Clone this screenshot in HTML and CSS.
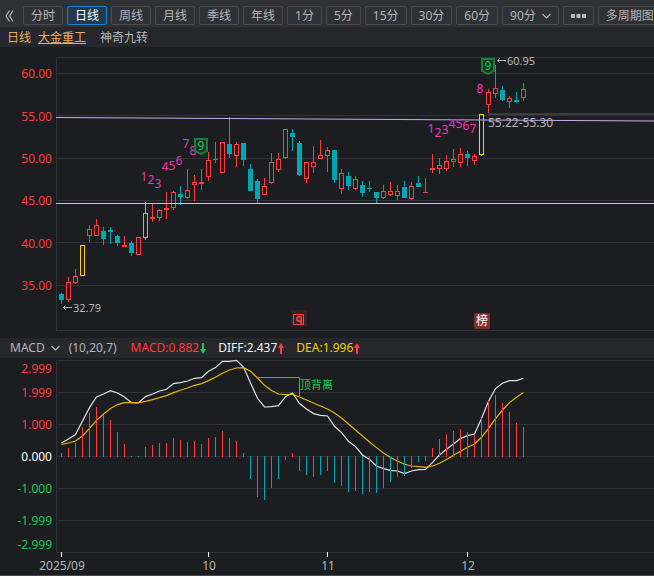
FILE: index.html
```html
<!DOCTYPE html>
<html lang="zh-Hans">
<head>
  <meta charset="UTF-8">
  <title>大金重工 日线</title>
  <link rel="stylesheet" href="styles.css">
</head>
<body>
  <nav class="toolbar">
    <button class="back" aria-label="收起">
      <svg width="9" height="12" viewBox="0 0 9 12"><path d="M4.5 0.5 L1 6 L4.5 11.5 M8 0.5 L4.5 6 L8 11.5"/></svg>
    </button>
    <button class="period">分时</button>
    <button class="period active">日线</button>
    <button class="period">周线</button>
    <button class="period">月线</button>
    <button class="period">季线</button>
    <button class="period">年线</button>
    <button class="period">1分</button>
    <button class="period">5分</button>
    <button class="period">15分</button>
    <button class="period">30分</button>
    <button class="period">60分</button>
    <button class="period">90分<svg class="chevron" width="9" height="6" viewBox="0 0 9 6"><path d="M0.5 1 L4.5 5 L8.5 1"/></svg></button>
    <button class="period more" aria-label="更多">
      <svg width="15" height="4" viewBox="0 0 15 4"><path d="M0 0h4v4H0z M5.5 0h4v4h-4z M11 0h4v4h-4z"/></svg>
    </button>
    <button class="period">多周期图</button>
  </nav>

  <header class="caption">
    <span class="stock">日线</span>
    <a class="stock" href="#">大金重工</a>
    <span class="signal">神奇九转</span>
  </header>

  <svg id="price" class="price"></svg>

  <div class="indicator">
    <button class="picker">MACD<svg class="chevron" width="9" height="6" viewBox="0 0 9 6"><path d="M0.5 1 L4.5 5 L8.5 1"/></svg></button>
    <span class="params">(10,20,7)</span>
    <span class="macd">MACD:0.882<svg class="down" width="6" height="11" viewBox="0 0 6 11"><path d="M2 0h2v6h2L3 11 0 6h2z"/></svg></span>
    <span class="diff">DIFF:2.437<svg class="up" width="6" height="11" viewBox="0 0 6 11"><path d="M2 11h2V5h2L3 0 0 5h2z"/></svg></span>
    <span class="dea">DEA:1.996<svg class="up" width="6" height="11" viewBox="0 0 6 11"><path d="M2 11h2V5h2L3 0 0 5h2z"/></svg></span>
  </div>

  <svg id="macd" class="macd-chart"></svg>
  <footer class="scroll"></footer>

  <script src="chart.js"></script>
</body>
</html>
```
FILE: styles.css
```css
* {
  box-sizing: border-box;
}
body {
  margin: 0;
  background: #1c1d21;
  color: #b4b6ba;
  font-family: "Noto Sans", "Noto Sans CJK SC", sans-serif;
  font-size: 12px;
  line-height: 16px;
  overflow: hidden;
}
button {
  font: inherit;
  color: inherit;
  cursor: pointer;
}
svg {
  display: block;
  flex-shrink: 0;
}
.toolbar {
  display: flex;
  align-items: center;
  gap: 4px;
  height: 27px;
  padding: 4px 0 0 4px;
  background: #303136;
  overflow: hidden;
  white-space: nowrap;
}
.back {
  flex-shrink: 0;
  width: 15px;
  padding: 0 1px;
  border: 0;
  background: none;
}
.back path,
.chevron path {
  fill: none;
  stroke: #b4b6ba;
  stroke-width: 1.2;
}
.period {
  display: flex;
  flex-shrink: 0;
  align-items: center;
  height: 19px;
  padding: 0 7px;
  border: 1px solid #4a4b50;
  border-radius: 2px;
  background: none;
  line-height: 16px;
}
.period.active {
  border-color: #1b82cc;
  background: #213a50;
  color: #fff;
}
.chevron {
  margin-left: 6px;
}
.more path {
  fill: #b4b6ba;
}
.caption {
  display: flex;
  align-items: center;
  gap: 7px;
  height: 20px;
  padding: 2px 0 0 7px;
  background: #26272b;
}
.stock {
  color: #eaad68;
  text-underline-offset: 1px;
}
.signal {
  margin-left: 7px;
}
.price {
  width: 100%;
  height: 291px;
}
.indicator {
  display: flex;
  align-items: center;
  height: 20px;
  padding-left: 10px;
  background: #26272b;
  white-space: nowrap;
}
.picker {
  display: flex;
  align-items: center;
  padding: 0;
  border: 0;
  background: none;
}
.params {
  margin: 0 14px 0 9px;
}
.macd,
.diff,
.dea {
  display: flex;
  align-items: center;
  gap: 1px;
  margin-right: 12px;
}
.macd {
  color: #ff3b3b;
}
.diff {
  color: #f2f2f2;
}
.dea {
  color: #f5cf00;
}
.down {
  fill: #16cb50;
}
.up {
  fill: #ff3b3b;
}
.macd-chart {
  width: 100%;
  height: 217px;
}
.scroll {
  height: 1px;
  background: #46474b;
}

/* chart parts */
text {
  fill: #b4b6ba;
}
.grid {
  stroke: #313237;
}
.end {
  text-anchor: end;
}
.mid {
  text-anchor: middle;
}
.rise {
  fill: #ff3b3b;
}
.fall {
  fill: #16cb50;
}
.zero {
  fill: #fff;
}
.small {
  font-size: 11px;
}
.count {
  fill: #ee35b4;
  font-size: 12px;
}
.trend {
  stroke: #c9a9ee;
}
.level {
  stroke: #cfbfe6;
}
.gap {
  fill: #3b3c40;
}
.shield {
  fill: #1b3027;
  stroke: #14803c;
  stroke-width: 2;
}
.nine {
  fill: #16cb50;
  font-size: 12px;
}
.stamp {
  fill: #3a2024;
}
.stamp-box {
  fill: none;
  stroke: #ff3b3b;
}
.stamp-text {
  font-weight: bold;
}
.rank {
  fill: #822d2f;
}
.rank-text {
  fill: #fff;
}
.line {
  fill: none;
  stroke-width: 1.2;
}
.diff-line {
  stroke: #e2e2e4;
}
.dea-line {
  stroke: #e2b808;
}
.mark {
  fill: none;
  stroke: #16cb50;
}
.arrow {
  fill: none;
  stroke: #b4b6ba;
}
.tick {
  fill: #fff;
}
```
FILE: chart.js
```js
const FIRST = 61;
const STEP = 7;
const colors = { r: '#ff3b3b', c: '#00a6b0', y: '#ffd000', p: '#f08ad0' };
const xAt = i => FIRST + STEP * i;

// kind, wick top, body top, body bottom, wick bottom
const candles = [
  ['c', 293, 294, 300, 304], ['r', 277, 282, 300, 302], ['r', 269, 276, 283, 284], ['y', 245, 245, 276, 276],
  ['r', 225, 229, 236, 242], ['r', 219, 225, 236, 236], ['c', 227, 231, 239, 245], ['c', 227, 230, 232, 244],
  ['c', 235, 236, 243, 246], ['r', 236, 245, 247, 247], ['c', 241, 243, 253, 256], ['r', 237, 237, 255, 255],
  ['p', 202, 213, 238, 240], ['r', 204, 217, 219, 222], ['r', 209, 210, 218, 221], ['r', 192, 208, 210, 219],
  ['r', 191, 192, 208, 210], ['c', 186, 194, 197, 205], ['r', 169, 190, 198, 199], ['r', 175, 182, 185, 201],
  ['r', 169, 182, 184, 190], ['r', 152, 160, 177, 181], ['c', 142, 159, 160, 163], ['r', 142, 142, 173, 173],
  ['c', 117, 144, 154, 158], ['r', 142, 144, 156, 167], ['c', 143, 143, 160, 166], ['c', 164, 169, 191, 191],
  ['c', 179, 181, 199, 203], ['r', 178, 186, 195, 195], ['r', 153, 162, 183, 184], ['r', 153, 159, 170, 172],
  ['r', 129, 129, 158, 159], ['c', 129, 133, 137, 151], ['c', 141, 143, 175, 176], ['r', 162, 162, 179, 183],
  ['r', 146, 162, 167, 173], ['r', 140, 155, 159, 159], ['r', 147, 150, 156, 172], ['c', 150, 150, 180, 183],
  ['r', 169, 173, 189, 194], ['c', 172, 176, 186, 190], ['r', 176, 179, 189, 190], ['c', 181, 185, 193, 197],
  ['c', 181, 188, 189, 192], ['c', 192, 192, 198, 203], ['r', 185, 191, 198, 199], ['r', 182, 191, 195, 196],
  ['r', 185, 191, 196, 200], ['c', 181, 187, 198, 198], ['r', 182, 186, 199, 200], ['c', 176, 183, 187, 187],
  ['r', 178, 192, 193, 193], ['r', 154, 168, 170, 173], ['r', 158, 165, 169, 174], ['r', 155, 161, 169, 171],
  ['r', 149, 159, 162, 167], ['r', 148, 154, 163, 167], ['c', 151, 154, 158, 166], ['r', 154, 156, 161, 165],
  ['y', 114, 114, 155, 156], ['r', 89, 92, 105, 113], ['r', 65, 88, 94, 98], ['c', 86, 90, 100, 101],
  ['r', 96, 98, 102, 108], ['c', 92, 100, 102, 103], ['r', 83, 89, 98, 101]
];

// three units to a pixel, the zero line is at 379
const diff = [338, 326, 313, 272, 232, 200, 191, 181, 188, 200, 217, 218, 199, 191, 182, 177, 160, 157, 152, 144, 142, 123,
  112, 93, 93, 90, 110, 158, 204, 230, 229, 226, 199, 188, 220, 236, 250, 255, 257, 288, 307, 333, 349, 374, 388, 407,
  415, 420, 422, 430, 422, 418, 417, 396, 374, 357, 341, 325, 316, 311, 265, 213, 175, 159, 151, 151, 144];
const dea = [342, 338, 332, 317, 294, 270, 251, 235, 223, 217, 217, 217, 213, 208, 202, 196, 187, 180, 173, 165, 160, 151,
  141, 129, 119, 113, 112, 123, 143, 165, 181, 191, 193, 192, 200, 209, 218, 227, 236, 248, 263, 281, 299, 317, 335, 352,
  368, 382, 392, 402, 407, 409, 411, 407, 399, 388, 375, 363, 351, 341, 321, 294, 265, 239, 217, 201, 187];
const bars = [369, 354, 339, 291, 249, 231, 255, 270, 306, 342, 381, 381, 351, 345, 339, 339, 324, 330, 336, 333, 342, 324,
  321, 303, 324, 333, 369, 447, 501, 510, 474, 447, 390, 369, 423, 435, 441, 435, 423, 459, 468, 486, 483, 492, 486, 489,
  474, 456, 441, 438, 414, 396, 393, 354, 327, 312, 303, 297, 306, 315, 264, 213, 195, 219, 246, 279, 291];

function text(x, y, cls, value) {
  return `<text x="${x}" y="${y}" class="${cls}">${value}</text>`;
}

function grid(ys, top, bottom) {
  return ys.map(y => `<line class="grid" x1="56" x2="100%" y1="${y + 0.5}" y2="${y + 0.5}"/>`).join('') +
    `<line class="grid" x1="56.5" x2="56.5" y1="${top}" y2="${bottom}"/>`;
}

function candle([kind, high, top, bottom, low], i) {
  const x = xAt(i);
  const color = colors[kind];
  const wick = (y, h) => h > 0 ? `<rect x="${x}" y="${y}" width="1" height="${h}" fill="${color}"/>` : '';
  const body = kind === 'c' || bottom - top < 3
    ? `<rect x="${x - 2}" y="${top}" width="5" height="${bottom - top}" fill="${color}"/>`
    : `<rect x="${x - 1.5}" y="${top + 0.5}" width="4" height="${bottom - top - 1}" fill="none" stroke="${color}"/>`;
  return wick(high, top - high) + wick(bottom, low - bottom) + body;
}

function shield(x, y) {
  return `<path class="shield" d="M${x - 6} ${y + 1}h12v12l-6 3l-6 -3z"/>` + text(x, y + 12, 'nine mid', 9);
}

function drawPrice() {
  let s = '<g transform="translate(0 -47)">';
  s += grid([57, 73, 115, 158, 200, 242, 285, 330], 57, 331);
  [60, 55, 50, 45, 40, 35].forEach((v, i) => {
    s += text(52, [78, 121, 163, 205, 248, 290][i], 'end rise', v.toFixed(2));
  });
  s += '<rect class="gap" x="488" y="113" width="100%" height="2"/>';
  s += candles.map(candle).join('');
  s += '<line class="trend" x1="56" y1="117.5" x2="100%" y2="121"/>';
  s += '<line class="level" x1="56" y1="203.5" x2="100%" y2="203.5"/>';

  const counts = [
    [144, 181, 1], [151, 184, 2], [158, 188, 3], [165, 171, 4], [172, 170, 5], [179, 165, 6], [186, 148, 7], [193, 155, 8],
    [431, 133, 1], [438, 137, 2], [445, 134, 3], [452, 128, 4], [459, 128, 5], [466, 130, 6], [473, 133, 7], [480, 93, 8]
  ];
  s += counts.map(([x, y, n]) => text(x, y, 'count mid', n)).join('');
  s += shield(201, 138) + shield(488, 58);

  s += '<path class="arrow" d="M63 307.5h9M65.5 305.5l-2 2l2 2M497 60.5h9M499.5 58.5l-2 2l2 2"/>';
  s += text(73, 312, 'small', '32.79') + text(507, 65, 'small', '60.95');
  s += text(488, 127, '', '55.22-55.30');

  s += '<rect class="stamp" x="291" y="310" width="16" height="16"/><rect class="stamp-box" x="293.5" y="314.5" width="10" height="10"/>';
  s += text(299, 322, 'small rise mid stamp-text', 'q');
  s += '<rect class="rank" x="474" y="313" width="16" height="16" rx="2"/>' + text(482, 325, 'rank-text mid', '榜');
  document.getElementById('price').innerHTML = s + '</g>';
}

function drawMacd() {
  const y = v => v / 3 - 28;
  const points = list => list.map((v, i) => `${xAt(i) + 0.5},${(y(v) + 0.3).toFixed(1)}`).join(' ');
  let s = grid([2, 34, 66, 98, 130, 162, 194], 2, 195);
  const labels = [['2.999', 15, 'rise'], ['1.999', 39, 'rise'], ['1.000', 71, 'rise'], ['0.000', 103, 'zero'],
    ['-1.000', 135, 'fall'], ['-1.999', 167, 'fall'], ['-2.999', 191, 'fall']];
  s += labels.map(([v, ly, cls]) => text(52, ly, 'end ' + cls, v)).join('');
  s += `<polyline class="line diff-line" points="${points(diff)}"/>`;
  s += `<polyline class="line dea-line" points="${points(dea)}"/>`;
  bars.forEach((v, i) => {
    const up = v < 379;
    const top = up ? y(v) : 98;
    const bottom = up ? 99 : y(v);
    s += `<rect x="${xAt(i)}" y="${top}" width="1" height="${bottom - top}" fill="${up ? colors.r : colors.c}"/>`;
  });
  s += '<path class="mark" d="M257 19.5h42.5v19"/>' + text(300, 31, 'small fall', '顶背离');
  [[0, '2025/09'], [21, '10'], [38, '11'], [58, '12']].forEach(([i, label]) => {
    const x = xAt(i);
    s += `<rect class="tick" x="${x}" y="194" width="1" height="5"/>` + text(x + 1, 212, 'mid', label);
  });
  document.getElementById('macd').innerHTML = s;
}

drawPrice();
drawMacd();
```
